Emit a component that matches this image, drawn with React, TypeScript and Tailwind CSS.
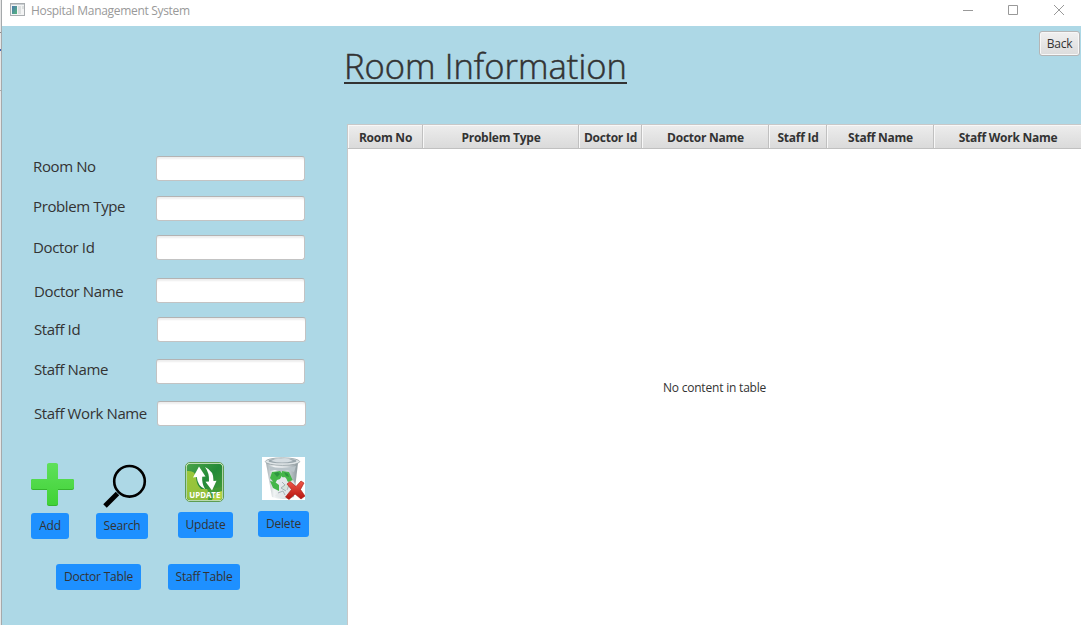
import React from "react";

const fields = [
  { label: "Room No", row: "mt-0", text: "ml-[31px] w-[123px] -top-[3px]" },
  { label: "Problem Type", row: "mt-[15px]", text: "ml-[31px] w-[123px] -top-[3px]" },
  { label: "Doctor Id", row: "mt-[14px]", text: "ml-[31px] w-[123px] -top-[1px]" },
  { label: "Doctor Name", row: "mt-[18px]", text: "ml-[32px] w-[122px] top-0" },
  { label: "Staff Id", row: "mt-[14px]", text: "ml-[32px] w-[123px] -top-[1px]" },
  { label: "Staff Name", row: "mt-[17px]", text: "ml-[32px] w-[122px] -top-[3px]" },
  { label: "Staff Work Name", row: "mt-[17px]", text: "ml-[32px] w-[123px] -top-[1px]" },
];

const columns = [
  { label: "Room No", width: "w-[75px]" },
  { label: "Problem Type", width: "w-[156px]" },
  { label: "Doctor Id", width: "w-[63px]" },
  { label: "Doctor Name", width: "w-[127px]" },
  { label: "Staff Id", width: "w-[58px]" },
  { label: "Staff Name", width: "w-[107px]" },
  { label: "Staff Work Name", width: "w-[148px]" },
];

function PlusIcon() {
  return (
    <svg width="43" height="43" viewBox="0 0 43 43" className="block">
      <defs>
        <linearGradient id="plus" x1="0" y1="0" x2="0" y2="1">
          <stop offset="0" stopColor="#5fe05a" />
          <stop offset="1" stopColor="#40d236" />
        </linearGradient>
      </defs>
      <path d="M18 1h7q2 0 2 2v13h14q2 0 2 2v7q0 2-2 2H27v14q0 2-2 2h-7q-2 0-2-2V27H2q-2 0-2-2v-7q0-2 2-2h14V3q0-2 2-2z" fill="#35b52d" />
      <path d="M18 0h7q2 0 2 2v14h14q2 0 2 2v6q0 2-2 2H27v14q0 2-2 2h-7q-2 0-2-2V26H2q-2 0-2-2v-6q0-2 2-2h14V2q0-2 2-2z" fill="url(#plus)" />
    </svg>
  );
}

function SearchIcon() {
  return (
    <svg width="44" height="44" viewBox="0 0 44 44" className="block">
      <circle cx="26.500" cy="17.300" r="15.300" fill="none" stroke="#000" strokeWidth="2.600" />
      <path d="M14.500 29.500 2 42" stroke="#000" strokeWidth="5" />
    </svg>
  );
}

function UpdateIcon() {
  return (
    <svg width="40" height="40" viewBox="0 0 40 40" className="block">
      <defs>
        <linearGradient id="upd" x1="0" y1="0" x2="1" y2="1">
          <stop offset="0" stopColor="#4aa34a" />
          <stop offset="0.500" stopColor="#238a38" />
          <stop offset="1" stopColor="#4a9f36" />
        </linearGradient>
        <linearGradient id="lime" x1="0" y1="0" x2="1" y2="1">
          <stop offset="0" stopColor="#9cc83a" />
          <stop offset="1" stopColor="#8cbb3c" />
        </linearGradient>
      </defs>
      <rect x="0.500" y="0.500" width="38" height="39" rx="4.500" fill="#e4f0d8" stroke="#5d9c52" />
      <rect x="1.700" y="1.700" width="35.600" height="36.600" rx="3.500" fill="url(#upd)" />
      <path d="M2 9q8-1 9 6 0 7 5 12h21v8q0 3-3 3H5q-3 0-3-3z" fill="url(#lime)" />
      <path d="M22 27q3 5 1 11h11q3 0 3-3V25z" fill="#439a36" />
      <path d="M27 38q2-8 10-9v6q0 3-3 3z" fill="#b2d244" />
      <path d="M8 15.500 14 4.500 20.500 14.500l-3.300.3q-.6 7 3 12.500-7.700-3-8.400-12.200z" fill="#fff" />
      <path d="M20 5q9 4 8.500 14l3-.2L27 28.500l-6.500-8.800 3.500-.3Q24.500 11 20 5z" fill="#fff" />
      <text x="19.800" y="35.500" textAnchor="middle" textLength="31" lengthAdjust="spacingAndGlyphs" fontFamily="Open Sans, sans-serif" fontSize="8.500" fontWeight="700" fill="#fff">UPDATE</text>
    </svg>
  );
}

function DeleteIcon() {
  return (
    <svg width="43" height="43" viewBox="0 0 43 43" className="block">
      <defs>
        <linearGradient id="bin" x1="0" y1="0" x2="1" y2="0">
          <stop offset="0" stopColor="#a3adb1" />
          <stop offset="0.250" stopColor="#f1f4f5" />
          <stop offset="0.650" stopColor="#d4dadd" />
          <stop offset="1" stopColor="#8a979c" />
        </linearGradient>
        <linearGradient id="cross" x1="0" y1="0" x2="0" y2="1">
          <stop offset="0" stopColor="#f0584a" />
          <stop offset="1" stopColor="#b41410" />
        </linearGradient>
      </defs>
      <path fill="#fff" d="M0 0h43v43H0z" />
      <path d="M4 6h32l-4 34q-11 4-22 0z" fill="url(#bin)" />
      <path d="M7 9q13 4 27 0l-2 6-6-2-7 2-6-2-5 1z" fill="#b9c4c9" />
      <ellipse cx="20.500" cy="4.600" rx="17.200" ry="3.800" fill="#dfe5e7" stroke="#95a1a5" strokeWidth=".8" />
      <ellipse cx="20.500" cy="4" rx="14" ry="2.300" fill="#9aa7ad" />
      <path d="M9 4q5-3 10-2 6-2 12 2-11 3-22 0z" fill="#d5dde1" />
      <path d="m10 15 8-1 3 3-3 5-3 1-2 4-5-6zM20 14l7 1 4 9-5 2-2-5-4-1zM8 24l5 1 4 3v6l-6-3zM27 26l1 3-6 5-3-4 4-3z" fill="#45b649" />
      <path d="m12 16 4-1 2 2-3 3zM22 15l4 2 1 3-3-1z" fill="#2e9440" />
      <path d="m18 22 5-2 3 5 5-2 2 4-3 12-9 2-8-2 6-6z" fill="#e3e8ea" opacity=".9" />
      <path d="m20 25 3 3-4 3 5 3M16 36l5-2 2 4M27 28l-2 5" stroke="#98a5ab" strokeWidth=".8" fill="none" />
      <path d="m25 27 3-2.500 6 5 5-5.500 3 2-3.500 6.500L43 39l-4 3-6-5-6 5.500-3.500-2.500 6-7.500z" fill="url(#cross)" stroke="#a5170f" strokeWidth=".6" />
    </svg>
  );
}

function BlueButton({ label, className }: { label: string; className: string }) {
  return (
    <button className={`flex h-[26px] items-center justify-center whitespace-nowrap rounded-[3px] bg-[#1e90ff] text-[12px] leading-none tracking-[-0.2px] text-[#333] ${className}`}>
      {label}
    </button>
  );
}

export default function App() {
  return (
    <div className="flex h-[625px] w-[1081px] overflow-hidden bg-white font-['Open_Sans',sans-serif] text-[#333]">
      <div className="flex w-[2px] shrink-0 flex-col border-r border-[#a5a9ab] bg-[#e6e6e6]">
        <div className="mt-8 h-px bg-[#888]" />
        <div className="mt-4 h-[2px] bg-[#3f66b0]" />
        <div className="mt-[39px] h-px bg-[#aaa]" />
      </div>
      <div className="flex min-w-0 flex-1 flex-col">
        <header className="flex h-[26px] shrink-0 items-start bg-white">
          <svg width="15" height="13" viewBox="0 0 15 13" className="ml-2 mt-[3px]">
            <defs>
              <linearGradient id="app" x1="0" y1="0" x2="1" y2="1">
                <stop offset="0" stopColor="#4a77ad" />
                <stop offset="1" stopColor="#55b77c" />
              </linearGradient>
            </defs>
            <rect x=".5" y=".5" width="14" height="12" fill="#f3f4f4" stroke="#a9adb0" />
            <path d="M1 1h13v1H1z" fill="#cbd0d3" />
            <path d="M2 3h5v8H2z" fill="url(#app)" />
            <path d="M8 3h3v8H8zM12 3h2v3h-2z" fill="#dcdfdf" />
          </svg>
          <span className="ml-[6px] mt-[3px] whitespace-nowrap text-[12px] leading-4 tracking-[-0.32px] text-[#999]">Hospital Management System</span>
          <svg width="102" height="12" viewBox="0 0 102 12" className="ml-auto mr-[16px] mt-[4px]" fill="none" stroke="#999">
            <path d="M0 6.500h10M45.500 1.500h9v9h-9zM91 1l10 10M101 1 91 11" />
          </svg>
        </header>
        <main className="flex min-h-0 flex-1 flex-col bg-[#add8e6]">
          <div className="flex h-[98px] shrink-0 items-start">
            <h1 className="ml-[342px] mt-[16px] whitespace-nowrap text-[34.5px] font-light leading-[48px] tracking-[0.05px] [-webkit-text-stroke:0.5px_#333]">
              <span className="block h-[42px] w-[283px] border-b-2 border-[#333]">Room Information</span>
            </h1>
            <button className="ml-auto mr-[1px] mt-[5px] h-[25px] w-[41px] rounded-[3px] border border-[#b5b5b5] bg-linear-to-b from-[#f0f0f0] to-[#dcdcdc] text-[12px] leading-none tracking-[-0.3px] shadow-[inset_0_0_0_1px_#f7f7f7]">Back</button>
          </div>
          <div className="flex min-h-0 flex-1">
            <section className="flex w-[345px] shrink-0 flex-col">
              <form className="pt-8">
                {fields.map((f) => (
                  <label key={f.label} className={`flex h-[25px] items-center ${f.row}`}>
                    <span className={`relative shrink-0 whitespace-nowrap text-[15px] leading-5 tracking-[-0.38px] ${f.text}`}>{f.label}</span>
                    <input className="h-[25px] w-[149px] rounded-[3px] border border-[#c3c3c3] border-t-[#b3b3b3] bg-white shadow-[inset_0_3px_2px_-1px_#eee] outline-none" />
                  </label>
                ))}
              </form>
              <div className="mt-[31px] flex h-[82px] items-start">
                <div className="ml-[29px] mt-[6px] w-[65px]">
                  <PlusIcon />
                  <BlueButton label="Add" className="mt-[7px] w-[38px]" />
                </div>
                <div className="mt-[7px] w-[82px]">
                  <div className="ml-[7px]"><SearchIcon /></div>
                  <BlueButton label="Search" className="mt-[5px] w-[52px]" />
                </div>
                <div className="mt-[5px] w-[80px]">
                  <div className="ml-[7px]"><UpdateIcon /></div>
                  <BlueButton label="Update" className="mt-[10px] w-[55px]" />
                </div>
                <div>
                  <div className="ml-1"><DeleteIcon /></div>
                  <BlueButton label="Delete" className="mt-[11px] w-[51px]" />
                </div>
              </div>
              <div className="ml-[54px] mt-[25px] flex gap-[27px]">
                <BlueButton label="Doctor Table" className="w-[85px]" />
                <BlueButton label="Staff Table" className="w-[72px]" />
              </div>
            </section>
            <section className="flex min-w-0 flex-1 flex-col border-l border-t border-[#c8c8c8] bg-white">
              <div className="flex h-[24px] shrink-0 overflow-hidden border-b border-[#c0c0c0]">
                {columns.map((c) => (
                  <div key={c.label} className={`flex shrink-0 items-center justify-center whitespace-nowrap border-r border-[#c0c0c0] bg-linear-to-b from-[#ededed] to-[#dadada] pl-px pt-[3px] text-[12px] font-bold leading-4 tracking-[-0.25px] shadow-[inset_1px_1px_0_#f8f8f8] ${c.width}`}>
                    {c.label}
                  </div>
                ))}
              </div>
              <div className="flex flex-1 items-center justify-center pt-px text-[12px] tracking-[-0.2px]">No content in table</div>
            </section>
          </div>
        </main>
      </div>
    </div>
  );
}
